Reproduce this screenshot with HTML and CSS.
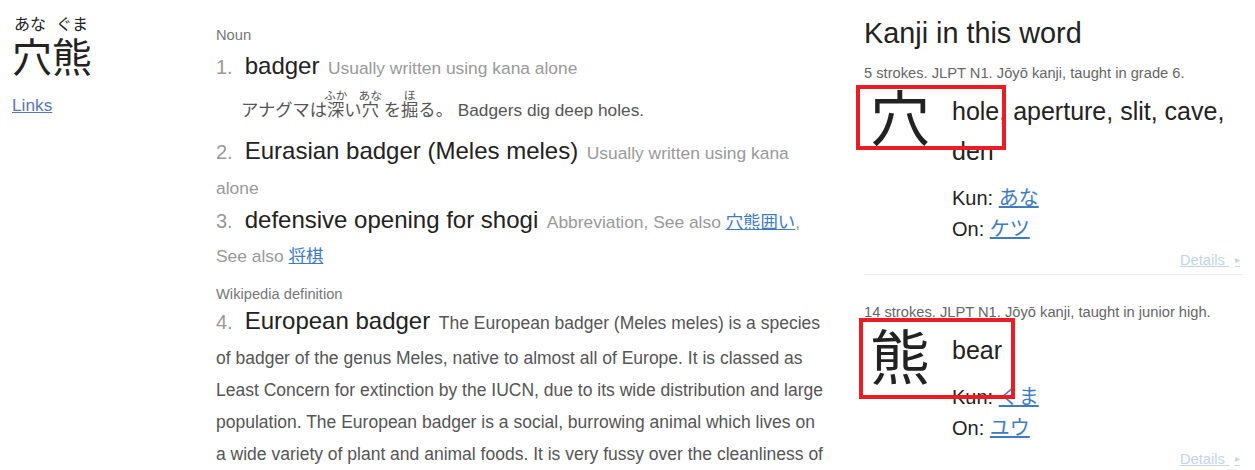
FILE: index.html
```html
<!DOCTYPE html>
<html lang="en">
<head>
<meta charset="utf-8">
<title>穴熊 - Jisho</title>
<link rel="stylesheet" href="styles.css">
</head>
<body>
<div class="page">
  <div class="concept">
    <div class="furi"><span>あな</span><span>ぐま</span></div>
    <div class="word">穴熊</div>
    <a class="links" href="#">Links</a>
  </div>

  <div class="meanings">
    <div class="tags">Noun</div>
    <div class="sense">
      <div class="def"><span class="num">1.</span><span class="meaning">badger</span> <span class="supp">Usually written using kana alone</span></div>
      <div class="sentence">アナグマは<span class="fw"><span class="fu">ふか</span><span class="kb">深</span></span>い<span class="fw"><span class="fu">あな</span><span class="kb">穴</span></span> を<span class="fw"><span class="fu">ほ</span><span class="kb">掘</span></span>る。 <span class="eng">Badgers dig deep holes.</span></div>
    </div>
    <div class="sense">
      <div class="def"><span class="num">2.</span><span class="meaning">Eurasian badger (Meles meles)</span> <span class="supp">Usually written using kana alone</span></div>
    </div>
    <div class="sense">
      <div class="def"><span class="num">3.</span><span class="meaning">defensive opening for shogi</span> <span class="supp">Abbreviation, See also <a href="#">穴熊囲い</a>, See also <a href="#">将棋</a></span></div>
    </div>
    <div class="tags wiki">Wikipedia definition</div>
    <div class="sense">
      <div class="def"><span class="num">4.</span><span class="meaning">European badger</span> <span class="abstract">The European badger (Meles meles) is a species of badger of the genus Meles, native to almost all of Europe. It is classed as Least Concern for extinction by the IUCN, due to its wide distribution and large population. The European badger is a social, burrowing animal which lives on a wide variety of plant and animal foods. It is very fussy over the cleanliness of its burrow.</span></div>
    </div>
  </div>

  <div class="kanji-panel">
    <h4 class="panel-title">Kanji in this word</h4>
    <div class="kanji-block">
      <div class="kinfo">5 strokes. JLPT N1. Jōyō kanji, taught in grade 6.</div>
      <div class="krow">
        <div class="kchar">穴</div>
        <div class="kbody">
          <div class="kmeanings">hole, aperture, slit, cave, den</div>
          <div class="readings">
            <div>Kun: <a href="#">あな</a></div>
            <div>On: <a href="#">ケツ</a></div>
          </div>
        </div>
      </div>
      <div class="details"><a href="#">Details <span class="tri">▸</span></a></div>
    </div>
    <div class="kanji-block second">
      <div class="kinfo">14 strokes. JLPT N1. Jōyō kanji, taught in junior high.</div>
      <div class="krow">
        <div class="kchar">熊</div>
        <div class="kbody">
          <div class="kmeanings">bear</div>
          <div class="readings">
            <div>Kun: <a href="#">くま</a></div>
            <div>On: <a href="#">ユウ</a></div>
          </div>
        </div>
      </div>
      <div class="details"><a href="#">Details <span class="tri">▸</span></a></div>
    </div>
  </div>
</div>
<div class="mark mark-one"></div>
<div class="mark mark-two"></div>
</body>
</html>
```

FILE: styles.css
```css
html, body {
  margin: 0;
  padding: 0;
  background: #fff;
  overflow: hidden;
}
body {
  font-family: "Liberation Sans", "Noto Sans CJK JP", sans-serif;
  color: #222;
  line-height: 1.6;
}
a {
  color: #3f7cbf;
}
.page {
  display: grid;
  grid-template-columns: 204px 610px 1fr;
  padding: 0 12px;
  height: 470px;
  overflow: hidden;
}

/* left concept */
.concept {
  padding-top: 13px;
}
.furi {
  display: flex;
  font-size: 16px;
  line-height: 23px;
  color: #222;
  margin-left: -3px;
}
.furi span {
  width: 42px;
  text-align: center;
}
.word {
  font-size: 40px;
  line-height: 44px;
  color: #222;
}
.links {
  display: inline-block;
  margin-top: 12px;
  font-size: 17.3px;
  color: #5a78b6;
}

/* meanings */
.meanings {
  font-size: 20px;
}
.tags {
  font-size: 14.7px;
  color: #777;
  margin-top: 24px;
  line-height: 23px;
}
.tags.wiki {
  margin-top: 12px;
  margin-bottom: -4px;
}
.def .num {
  color: #999;
  font-size: 20px;
  margin-right: 12px;
}
.meaning {
  font-size: 24px;
  color: #222;
}
.supp {
  font-size: 17.4px;
  color: #999;
  margin-left: 3px;
}
.supp a {
  color: #3f7cbf;
}
.abstract {
  font-size: 17.5px;
  color: #555;
  margin-left: 3px;
}
.sense + .sense {
  margin-top: -2px;
}
.sentence {
  font-size: 17.3px;
  color: #555;
  line-height: 24px;
  margin: 0 0 12px 25px;
  padding-top: 13px;
}
.fw {
  display: inline-block;
  position: relative;
}
.fu {
  position: absolute;
  left: -12px;
  right: -12px;
  bottom: calc(100% - 4px);
  text-align: center;
  font-size: 11.7px;
  line-height: 12px;
  white-space: nowrap;
}

/* kanji panel */
.kanji-panel {
  margin-left: 38px;
}
.panel-title {
  font-size: 28.8px;
  font-weight: normal;
  line-height: 34px;
  margin: 16px 0 0;
  color: #222;
}
.kinfo {
  font-size: 14.7px;
  color: #666;
  line-height: 22px;
  margin-top: 12px;
}
.krow {
  display: flex;
}
.kchar {
  width: 82px;
  padding-left: 6px;
  margin-top: -5px;
  font-family: "Noto Sans CJK JP", sans-serif;
  font-size: 60px;
  line-height: 72px;
  color: #222;
}
.kbody {
  flex: 1;
  padding-top: 7px;
}
.kmeanings {
  font-size: 25px;
  line-height: 40px;
  color: #222;
}
.readings {
  font-size: 20px;
  line-height: 31px;
  margin-top: 12px;
}
.details {
  text-align: right;
  font-size: 14.7px;
  line-height: 22px;
  padding: 4px 3px 3px 0;
  border-bottom: 1px solid #ececec;
}
.details a {
  color: #c3d4ea;
}
.tri {
  font-size: 10px;
  margin-left: 6px;
  vertical-align: 2px;
}
.second .details {
  border-bottom: none;
}
.second .kinfo {
  margin-top: 26px;
}

/* annotation overlay */
.mark {
  position: absolute;
  border: 4px solid #ec1c24;
  box-sizing: border-box;
}
.mark-one {
  left: 856px;
  top: 85px;
  width: 150px;
  height: 65px;
}
.mark-two {
  left: 859px;
  top: 318px;
  width: 156px;
  height: 81px;
}
```
